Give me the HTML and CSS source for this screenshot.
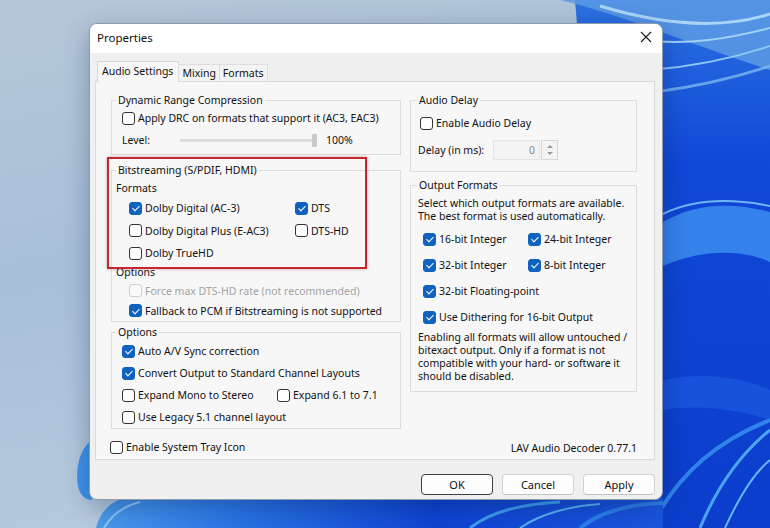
FILE: index.html
```html
<!DOCTYPE html>
<html lang="en">
<head>
  <meta charset="UTF-8" />
  <title>Properties</title>
  <link rel="stylesheet" href="styles.css">
</head>
<body>
  <div class="desktop">

    <!-- Fond d'écran -->
    <svg class="wallpaper" width="770" height="528" viewBox="0 0 770 528">
      <defs>
        <linearGradient id="sky" x1="0" y1="0" x2="0.3" y2="1">
          <stop offset="0" stop-color="#b6c8da"/>
          <stop offset="0.5" stop-color="#a7bfd7"/>
          <stop offset="1" stop-color="#b8cbdf"/>
        </linearGradient>
        <linearGradient id="deep" x1="0" y1="0" x2="0" y2="1">
          <stop offset="0" stop-color="#2c72e2"/>
          <stop offset="0.3" stop-color="#1048d8"/>
          <stop offset="1" stop-color="#0c3dcc"/>
        </linearGradient>
        <linearGradient id="floor" x1="0" y1="0" x2="1" y2="0">
          <stop offset="0" stop-color="#4a9cec"/>
          <stop offset="0.25" stop-color="#2a74e6"/>
          <stop offset="0.6" stop-color="#0f44d4"/>
          <stop offset="1" stop-color="#1a56e0"/>
        </linearGradient>
      </defs>
      <rect width="770" height="528" fill="url(#sky)"/>
      <path d="M575 0 H770 V528 H640 L600 300 Z" fill="url(#deep)"/>
      <path d="M560 0 C620 14 690 44 770 70 V0 Z" fill="#5c9ae4" opacity=".85"/>
      <path d="M600 6 C660 24 720 30 770 14" stroke="#a9d5f6" stroke-width="3" fill="none"/>
      <path d="M640 40 C690 46 730 38 770 28" stroke="#9fd0f6" stroke-width="2" fill="none"/>
      <path d="M650 70 C700 66 740 56 770 46" stroke="#8cc6f4" stroke-width="2" fill="none"/>
      <path d="M655 92 C700 86 740 76 770 66" stroke="#7ab8f0" stroke-width="3" fill="none" opacity=".8"/>
      <path d="M663 222 C700 200 740 204 770 212 V262 C740 248 700 250 663 266 Z" fill="#3b8df0" opacity=".85"/>
      <path d="M663 214 C700 196 740 200 770 206" stroke="#6fb6f5" stroke-width="2" fill="none"/>
      <path d="M663 380 C700 372 740 376 770 390 V420 C740 410 700 404 663 410 Z" fill="#1a56e0" opacity=".8"/>
      <path d="M700 528 C720 480 745 450 770 430" stroke="#4aa6f2" stroke-width="3" fill="none"/>
      <path d="M725 528 C740 495 755 472 770 460" stroke="#66b8f5" stroke-width="2" fill="none"/>
      <path d="M650 528 C680 470 720 440 770 420" stroke="#2f84ea" stroke-width="4" fill="none"/>
      <path d="M92 440 C80 448 75 468 78 486 C80 496 86 500 92 500 Z" fill="#3f93ea"/>
      <path d="M96 528 C100 512 110 502 124 498 L663 498 V528 Z" fill="url(#floor)"/>
      <path d="M104 528 C112 514 124 506 140 502" stroke="#8fc8f3" stroke-width="2" fill="none"/>
      <path d="M470 528 C490 512 520 504 560 502" stroke="#3ba0f0" stroke-width="3" fill="none"/>
      <path d="M520 528 C540 514 570 506 600 504" stroke="#5bb4f4" stroke-width="2" fill="none"/>
      <path d="M580 528 C600 512 630 504 663 503" stroke="#2c80ea" stroke-width="4" fill="none"/>
    </svg>

    <!-- Fenêtre -->
    <div class="dialog">
      <div class="titlebar">
        <span>Properties</span>
        <svg class="close" width="12" height="12" viewBox="0 0 12 12">
          <path d="M1 1 L11 11 M11 1 L1 11" stroke="#1b1b1b" stroke-width="1.1"/>
        </svg>
      </div>

      <div class="dialog-body">
        <div class="tabs">
          <div class="tab active">Audio Settings</div>
          <div class="tab">Mixing</div>
          <div class="tab">Formats</div>
        </div>

        <div class="panel">
          <div class="columns">

            <!-- Colonne gauche -->
            <div class="col">
              <fieldset class="group drc">
                <legend>Dynamic Range Compression</legend>
                <div class="cb"><span class="box"></span>Apply DRC on formats that support it (AC3, EAC3)</div>
                <div class="level-row">
                  <span class="level-label">Level:</span>
                  <div class="slider"><div class="thumb"></div></div>
                  <span class="level-value">100%</span>
                </div>
              </fieldset>

              <fieldset class="group bitstream">
                <legend>Bitstreaming (S/PDIF, HDMI)</legend>
                <div class="sublabel first">Formats</div>
                <div class="cb-grid formats">
                  <div class="cb"><span class="box on"></span>Dolby Digital (AC-3)</div>
                  <div class="cb"><span class="box on"></span>DTS</div>
                  <div class="cb"><span class="box"></span>Dolby Digital Plus (E-AC3)</div>
                  <div class="cb"><span class="box"></span>DTS-HD</div>
                  <div class="cb"><span class="box"></span>Dolby TrueHD</div>
                </div>
                <div class="sublabel">Options</div>
                <div class="cb-list bs-options">
                  <div class="cb disabled"><span class="box"></span>Force max DTS-HD rate (not recommended)</div>
                  <div class="cb"><span class="box on"></span>Fallback to PCM if Bitstreaming is not supported</div>
                </div>
              </fieldset>

              <fieldset class="group options">
                <legend>Options</legend>
                <div class="cb-grid opts">
                  <div class="cb wide"><span class="box on"></span>Auto A/V Sync correction</div>
                  <div class="cb wide"><span class="box on"></span>Convert Output to Standard Channel Layouts</div>
                  <div class="cb"><span class="box"></span>Expand Mono to Stereo</div>
                  <div class="cb"><span class="box"></span>Expand 6.1 to 7.1</div>
                  <div class="cb wide"><span class="box"></span>Use Legacy 5.1 channel layout</div>
                </div>
              </fieldset>
            </div>

            <!-- Colonne droite -->
            <div class="col">
              <fieldset class="group delay">
                <legend>Audio Delay</legend>
                <div class="cb"><span class="box"></span>Enable Audio Delay</div>
                <div class="delay-row">
                  <span class="delay-label">Delay (in ms):</span>
                  <div class="num">0</div>
                  <div class="spin">
                    <span class="arrow up"></span>
                    <span class="arrow down"></span>
                  </div>
                </div>
              </fieldset>

              <fieldset class="group output">
                <legend>Output Formats</legend>
                <p class="desc">Select which output formats are available.<br>The best format is used automatically.</p>
                <div class="cb-grid outfmt">
                  <div class="cb"><span class="box on"></span>16-bit Integer</div>
                  <div class="cb"><span class="box on"></span>24-bit Integer</div>
                  <div class="cb"><span class="box on"></span>32-bit Integer</div>
                  <div class="cb"><span class="box on"></span>8-bit Integer</div>
                  <div class="cb wide"><span class="box on"></span>32-bit Floating-point</div>
                  <div class="cb wide"><span class="box on"></span>Use Dithering for 16-bit Output</div>
                </div>
                <p class="desc note">Enabling all formats will allow untouched /<br>bitexact output. Only if a format is not<br>compatible with your hard- or software it<br>should be disabled.</p>
              </fieldset>
            </div>
          </div>

          <div class="panel-footer">
            <div class="cb"><span class="box"></span>Enable System Tray Icon</div>
            <span class="version">LAV Audio Decoder 0.77.1</span>
          </div>

          <!-- Cadre rouge d'annotation -->
          <div class="highlight"></div>
        </div>

        <div class="buttons">
          <button class="btn default">OK</button>
          <button class="btn">Cancel</button>
          <button class="btn">Apply</button>
        </div>
      </div>
    </div>
  </div>
</body>
</html>
```

FILE: styles.css
```css
* {
  box-sizing: border-box;
}
body {
  margin: 0;
  font-family: "Noto Sans", "Open Sans", sans-serif;
  font-size: 10.5px;
  color: #111;
  overflow: hidden;
}

.desktop {
  position: relative;
  width: 770px;
  height: 528px;
  padding: 23px 0 0 89px;
}
.wallpaper {
  position: absolute;
  top: 0;
  left: 0;
  z-index: 0;
}

/* Fenêtre */
.dialog {
  position: relative;
  z-index: 1;
  width: 574px;
  height: 477px;
  background: #f0f0f0;
  border: 1px solid #8d9cad;
  border-radius: 8px;
  box-shadow: 0 8px 26px rgba(0, 20, 60, 0.3);
  overflow: hidden;
  display: flex;
  flex-direction: column;
}
.titlebar {
  height: 29px;
  flex: none;
  background: #fff;
  display: flex;
  align-items: center;
  justify-content: space-between;
  padding: 0 10px 3px 7px;
  font-size: 11.5px;
}
.dialog-body {
  flex: 1;
  padding: 9px 7px 0 5px;
}

/* Onglets */
.tabs {
  display: flex;
  align-items: flex-end;
  height: 19px;
  margin-left: 2px;
  position: relative;
  z-index: 2;
}
.tab {
  height: 17px;
  line-height: 16px;
  padding: 0 3px;
  background: #f3f3f3;
  border: 1px solid #dedede;
  border-bottom: none;
  margin-left: -1px;
}
.tab.active {
  height: 21px;
  line-height: 19px;
  padding: 0 5px 0 4px;
  background: #f7f7f7;
  margin-left: 0;
  margin-bottom: -1px;
  border-color: #d6d6d6;
}

.panel {
  position: relative;
  width: 560px;
  height: 379px;
  background: #f7f7f7;
  border: 1px solid #d9d9d9;
  padding: 12px 17px 0 15px;
}
.columns {
  display: grid;
  grid-template-columns: 290px 227px;
  column-gap: 9px;
  align-items: start;
}

/* Groupes */
.group {
  margin: 0;
  padding: 0;
  min-width: 0;
  border: 1px solid #dcdcdc;
}
.group legend {
  padding: 0 2px;
  line-height: 13px;
}

.cb {
  display: flex;
  align-items: center;
  gap: 3px;
  height: 22px;
  white-space: nowrap;
}
.box {
  width: 13px;
  height: 13px;
  flex: none;
  border: 1px solid #333;
  border-radius: 3px;
  background: #fff;
}
.box.on {
  background: #0f62be;
  border-color: #0f62be;
}
.box.on::after {
  content: '';
  display: block;
  width: 3px;
  height: 6px;
  margin: 1.5px 0 0 3.8px;
  border: solid #fff;
  border-width: 0 1.2px 1.2px 0;
  transform: rotate(45deg);
}
.cb.disabled {
  color: #a3a3a3;
}
.cb.disabled .box {
  border-color: #cfcfcf;
  background: #fafafa;
}

.cb-grid {
  display: grid;
}
.cb-grid .wide {
  grid-column: 1 / -1;
}

/* DRC */
.drc {
  padding: 0 0 3px 10px;
}
.drc legend {
  margin-left: -6px;
}
.level-row {
  display: flex;
  align-items: center;
  height: 22px;
}
.level-label {
  width: 58px;
}
.slider {
  width: 137px;
  height: 13px;
  display: flex;
  justify-content: flex-end;
  background: linear-gradient(#f7f7f7 5px, #dedede 5px, #dedede 8px, #f7f7f7 8px);
}
.thumb {
  width: 5px;
  height: 13px;
  background: #c9c9c9;
  border-radius: 1px;
}
.level-value {
  margin-left: 9px;
}

/* Bitstreaming */
.bitstream {
  margin-top: 9px;
  padding: 0 0 0 4px;
}
.bitstream legend {
  margin-left: 0;
}
.sublabel {
  height: 14px;
  line-height: 14px;
}
.sublabel.first {
  margin-top: 4px;
}
.formats {
  margin: 2px 0 0 13px;
  grid-template-columns: 166px auto;
  grid-auto-rows: 22.5px;
}
.formats .cb {
  height: 22.5px;
}
.bs-options {
  margin: 2px 0 0 13px;
}
.bs-options .cb {
  height: 20px;
}

/* Options */
.options {
  margin-top: 4px;
  padding: 1.5px 0 0 10px;
}
.options legend {
  margin-left: -6px;
}
.opts {
  grid-template-columns: 155px auto;
}

/* Audio Delay */
.delay {
  padding: 5px 0 10px 9px;
}
.delay legend {
  margin-left: -3px;
}
.delay-row {
  display: flex;
  align-items: center;
  height: 22px;
  margin: 5px 0 0 -2px;
}
.delay-label {
  width: 75px;
}
.num {
  width: 47px;
  height: 20px;
  line-height: 18px;
  text-align: right;
  padding-right: 4px;
  color: #8a8a8a;
  background: #f3f3f3;
  border: 1px solid #e4e4e4;
}
.spin {
  width: 17px;
  height: 20px;
  margin-left: 1px;
  border: 1px solid #d6d6d6;
  background: #f4f4f4;
  display: flex;
  flex-direction: column;
  align-items: center;
  justify-content: space-around;
  padding: 2px 0;
}
.arrow {
  width: 0;
  height: 0;
  border-left: 3px solid transparent;
  border-right: 3px solid transparent;
}
.arrow.up {
  border-bottom: 3px solid #9a9a9a;
}
.arrow.down {
  border-top: 3px solid #9a9a9a;
}

/* Output Formats */
.output {
  margin-top: 7px;
  padding: 0 0 8px 7px;
}
.output legend {
  margin-left: -1px;
}
.desc {
  margin: 5px 0 0;
  line-height: 13px;
}
.outfmt {
  margin: 3px 0 0 5px;
  grid-template-columns: 105px auto;
}
.outfmt .cb {
  height: 26px;
}
.desc.note {
  margin-top: 1px;
}

/* Pied du panneau */
.panel-footer {
  display: flex;
  justify-content: space-between;
  align-items: center;
  margin: 8px 0 0 -1px;
}
.panel-footer .cb {
  height: 20px;
}
.version {
  padding-top: 2px;
}

.highlight {
  position: absolute;
  left: 11px;
  top: 75px;
  width: 260px;
  height: 112px;
  border: 2px solid #c6262f;
  box-shadow: 0 0 3px rgba(120, 0, 0, 0.35);
}

/* Boutons */
.buttons {
  display: flex;
  justify-content: flex-end;
  gap: 9px;
  margin-top: 14px;
}
.btn {
  width: 72px;
  height: 21px;
  font-family: inherit;
  font-size: 11px;
  color: #111;
  background: #fdfdfd;
  border: 1px solid #d2d2d2;
  border-bottom-color: #c2c2c2;
  border-radius: 4px;
  padding: 0;
}
.btn.default {
  border: 1px solid #3a3f45;
}
```
